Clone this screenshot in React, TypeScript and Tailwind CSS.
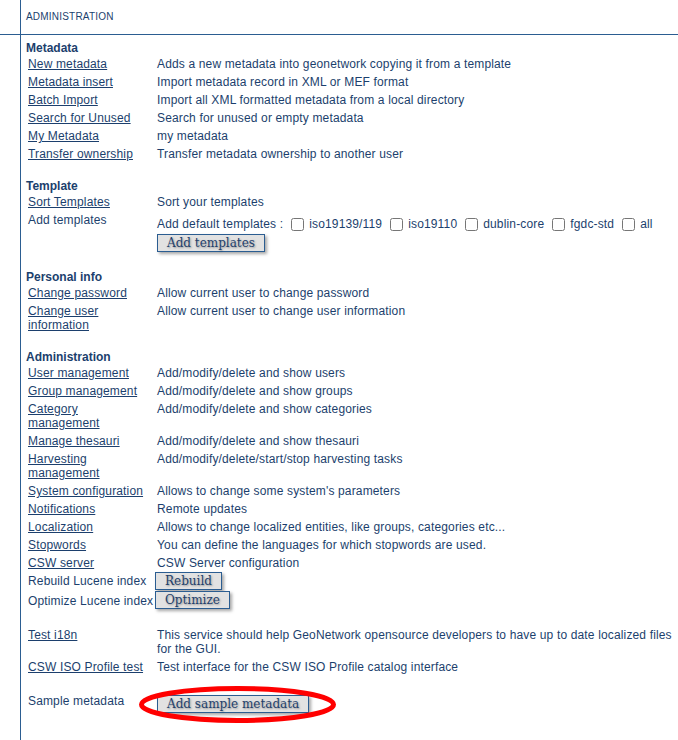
const rows1 = [
  ['New metadata', 'Adds a new metadata into geonetwork copying it from a template'],
  ['Metadata insert', 'Import metadata record in XML or MEF format'],
  ['Batch Import', 'Import all XML formatted metadata from a local directory'],
  ['Search for Unused', 'Search for unused or empty metadata'],
  ['My Metadata', 'my metadata'],
  ['Transfer ownership', 'Transfer metadata ownership to another user'],
];

const adminRows: [string[], string][] = [
  [['User management'], 'Add/modify/delete and show users'],
  [['Group management'], 'Add/modify/delete and show groups'],
  [['Category', 'management'], 'Add/modify/delete and show categories'],
  [['Manage thesauri'], 'Add/modify/delete and show thesauri'],
  [['Harvesting', 'management'], 'Add/modify/delete/start/stop harvesting tasks'],
  [['System configuration'], "Allows to change some system's parameters"],
  [['Notifications'], 'Remote updates'],
  [['Localization'], 'Allows to change localized entities, like groups, categories etc...'],
  [['Stopwords'], 'You can define the languages for which stopwords are used.'],
  [['CSW server'], 'CSW Server configuration'],
];

const templates = ['iso19139/119', 'iso19110', 'dublin-core', 'fgdc-std', 'all'];

const Heading = ({ children }: { children: string }) => (
  <div className="h-[16px] font-bold leading-[18px] tracking-normal">{children}</div>
);

const Btn = ({ label }: { label: string }) => (
  <button className="h-[18px] border border-[#2b5d91] bg-[#e2e2e2] px-[9px] font-['DejaVu_Serif',serif] text-[12px] leading-[15px] tracking-normal text-[#1f3f6b] shadow-[2px_2px_3px_rgba(0,0,0,0.35)] [text-shadow:1px_1px_2px_rgba(0,0,0,0.35)]">
    {label}
  </button>
);

const LinkRow = ({ lines, desc }: { lines: string[]; desc: string }) => (
  <div className="grid grid-cols-[129px_1fr]">
    <div className="px-[2px] py-[2px] whitespace-nowrap">
      {lines.map((l, i) => (
        <div key={i}>
          <a href="#" className="underline">{l}</a>
        </div>
      ))}
    </div>
    <div className="px-[2px] py-[2px] whitespace-nowrap">{desc}</div>
  </div>
);

export default function App() {
  return (
    <div className="min-h-[740px] bg-white font-['Liberation_Sans',Arial,sans-serif] text-[12px] leading-[14px] tracking-[0.15px] text-[#1c3f6d]">
      {/* header */}
      <div className="flex h-[35px] border-b border-[#2b5d91]">
        <div className="w-[20px]" />
        <div className="flex flex-1 items-center border-l border-[#2b5d91] pl-[5px] text-[10px] tracking-[0.2px]">
          ADMINISTRATION
        </div>
      </div>

      <div className="flex min-h-[705px]">
        <div className="w-[20px]" />
        <div className="flex-1 border-l border-[#2b5d91] pl-[5px] pt-[4px]">
          <Heading>Metadata</Heading>
          {rows1.map(([l, d]) => (
            <LinkRow key={l} lines={[l]} desc={d} />
          ))}

          <div className="h-[14px]" />
          <Heading>Template</Heading>
          <LinkRow lines={['Sort Templates']} desc="Sort your templates" />
          <div className="grid grid-cols-[129px_1fr]">
            <div className="px-[2px] py-[2px]">Add templates</div>
            <div className="px-[2px] pt-[3px] pb-[1px]">
              <div className="flex h-[20px] items-center whitespace-nowrap">
                <span>Add default templates :</span>
                {templates.map((t) => (
                  <label key={t} className="flex items-center">
                    <input type="checkbox" className="ml-[8px] mr-[5px] h-[13px] w-[13px]" />
                    <span>{t}</span>
                  </label>
                ))}
              </div>
              <Btn label="Add templates" />
            </div>
          </div>

          <div className="h-[15px]" />
          <Heading>Personal info</Heading>
          <LinkRow lines={['Change password']} desc="Allow current user to change password" />
          <LinkRow lines={['Change user', 'information']} desc="Allow current user to change user information" />

          <div className="h-[14px]" />
          <Heading>Administration</Heading>
          {adminRows.map(([l, d]) => (
            <LinkRow key={l.join(' ')} lines={l} desc={d} />
          ))}
          <div className="grid h-[19px] grid-cols-[129px_1fr]">
            <div className="px-[2px] pt-[2px] whitespace-nowrap">Rebuild Lucene index</div>
            <div>
              <Btn label="Rebuild" />
            </div>
          </div>
          <div className="grid h-[19px] grid-cols-[129px_1fr]">
            <div className="px-[2px] pt-[3px] whitespace-nowrap">Optimize Lucene index</div>
            <div>
              <Btn label="Optimize" />
            </div>
          </div>

          <div className="h-[16px]" />
          <div className="grid grid-cols-[129px_1fr]">
            <div className="px-[2px] py-[2px]">
              <a href="#" className="underline">Test i18n</a>
            </div>
            <div className="px-[2px] py-[2px] whitespace-nowrap">
              This service should help GeoNetwork opensource developers to have up to date localized files
              <br />
              for the GUI.
            </div>
          </div>
          <LinkRow lines={['CSW ISO Profile test']} desc="Test interface for the CSW ISO Profile catalog interface" />

          <div className="h-[16px]" />
          <div className="grid grid-cols-[129px_1fr]">
            <div className="px-[2px] py-[2px]">Sample metadata</div>
            <div className="px-[2px] pt-[3px]">
              <div className="relative inline-block">
                <Btn label="Add sample metadata" />
                <svg className="pointer-events-none absolute left-[-18px] top-[-9px]" width="197" height="37" viewBox="0 0 197 37">
                  <ellipse cx="98.5" cy="18.5" rx="96" ry="16" fill="none" stroke="#ff0000" strokeWidth="5" />
                </svg>
              </div>
            </div>
          </div>
        </div>
      </div>
    </div>
  );
}
